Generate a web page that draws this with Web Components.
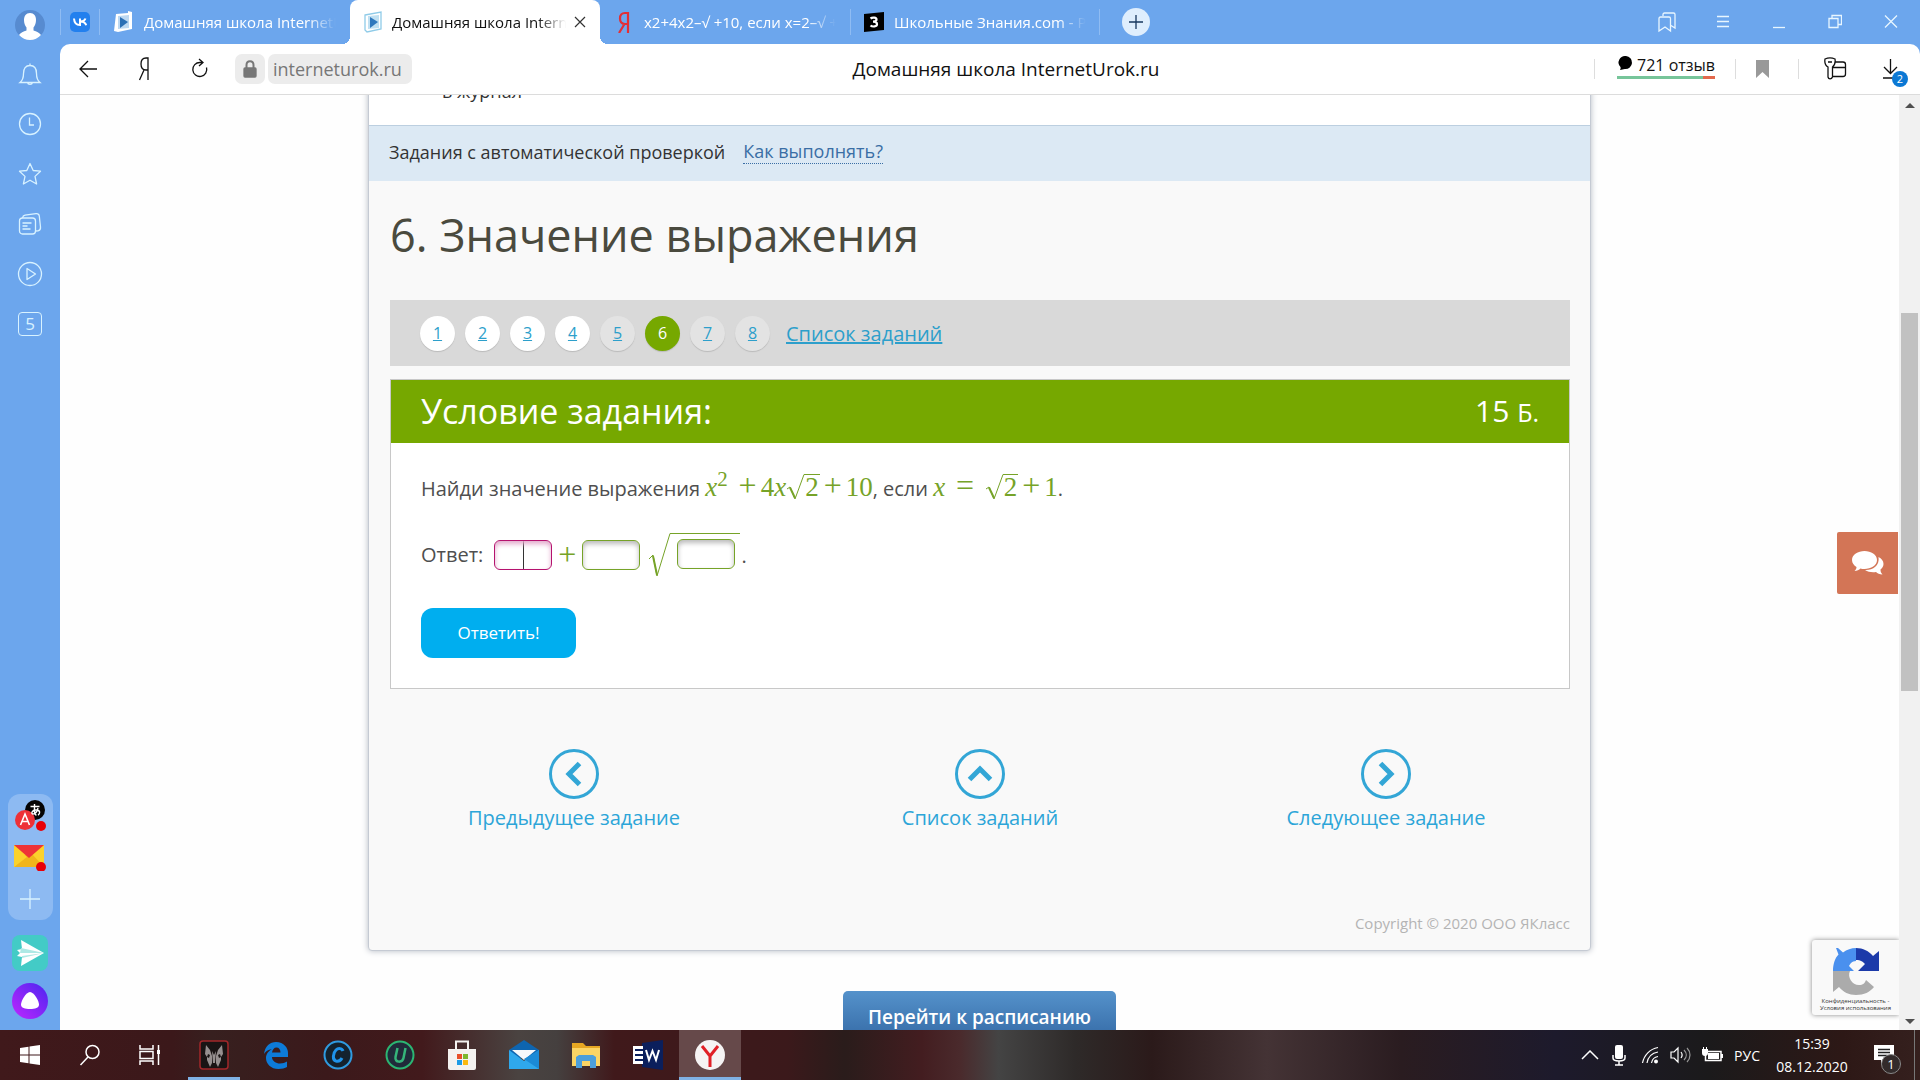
<!DOCTYPE html>
<html lang="ru">
<head>
<meta charset="utf-8">
<title>Домашняя школа InternetUrok.ru</title>
<style>
    html, body {
        height: 100%;
        margin: 0;
        overflow: hidden;
        font-family: "Open Sans", "Noto Sans", "Noto Sans CJK JP", sans-serif;
    }
</style>
</head>
<body>

<desk-top></desk-top>

<template id="desk-top">
    <style>
        :host {
            display: grid;
            grid-template: minmax(0, 1fr) 50px / 60px minmax(0, 1fr);
            height: 100%;
            background: #6ca6ed;
        }
        main {
            display: flex;
            flex-direction: column;
            min-height: 0;
        }
        task-bar {
            grid-column: 1 / -1;
        }
    </style>
    <side-bar></side-bar>
    <main>
        <tab-strip></tab-strip>
        <address-bar></address-bar>
        <page-view></page-view>
    </main>
    <task-bar></task-bar>
</template>

<!-- left browser panel -->
<template id="side-bar">
    <style>
        :host {
            display: flex;
            flex-direction: column;
            align-items: center;
        }
        button {
            all: unset;
            display: flex;
            align-items: center;
            justify-content: center;
            width: 50px;
            height: 50px;
            color: #d8f2ff;
            font-size: 17px;
        }
        svg {
            display: block;
            fill: none;
            stroke: currentColor;
            stroke-width: 1.3;
        }
        .user {
            height: 49px;
        }
        .square {
            box-sizing: border-box;
            width: 24px;
            height: 24px;
            border: 1px solid currentColor;
            border-radius: 4px;
            line-height: 22px;
            text-align: center;
        }
        .apps {
            display: flex;
            flex-direction: column;
            align-items: center;
            margin-top: auto;
            border-radius: 12px;
            background: #8dbaf2;
        }
        .apps button {
            width: 45px;
            height: 42px;
        }
        .big {
            height: 36px;
            margin-top: 15px;
        }
        .alice {
            margin: 12px 0 11px;
        }
    </style>
    <button class="user" aria-label="Профиль">
        <svg width="30" height="30" viewBox="0 0 30 30"><g stroke="none"><circle cx="15" cy="15" r="15" fill="#578bd0"/><path d="M15 3c4 0 6 3 6 7 0 3-1 6-2.500 7.500v3c3 1 6 2 7.500 4.500A15 15 0 0 1 15 30 15 15 0 0 1 4 25c1.500-2.500 4.500-3.500 7.500-4.500v-3C10 16 9 13 9 10c0-4 2-7 6-7z" fill="#fff"/></g></svg>
    </button>
    <button aria-label="Уведомления"><svg width="24" height="24" viewBox="0 0 24 24"><path d="M12 1.500v2M2 20.500h20c-2.500-2-3.500-4-3.500-9 0-5-2-8-6.500-8s-6.500 3-6.500 8c0 5-1 7-3.500 9zM9.500 20.500c.5 2.500 4.500 2.500 5 0"/></svg></button>
    <button aria-label="История"><svg width="24" height="24" viewBox="0 0 24 24"><circle cx="12" cy="12" r="10.500"/><path d="M11.500 5.500V13H16"/></svg></button>
    <button aria-label="Избранное"><svg width="24" height="24" viewBox="0 0 24 24"><path stroke-linejoin="round" d="M12 1.500l3.200 7 7.300.7-5.500 5.200 1.600 7.600-6.600-3.800L5.400 22 7 14.400 1.500 9.200l7.300-.7z"/></svg></button>
    <button aria-label="Коллекции"><svg width="24" height="24" viewBox="0 0 24 24"><rect x="1.500" y="6" width="16" height="16" rx="3"/><path d="M4.500 6c.3-2 1-2.500 2.500-2.800l11-1.500c2-.2 3 .6 3.300 2.300l1.200 11c.2 2-.6 3.500-2.500 3.800l-2.500.2M4.500 11h9M4.500 14h5M4.500 17h8"/></svg></button>
    <button aria-label="Видео"><svg width="26" height="26" viewBox="0 0 26 26"><circle cx="13" cy="13" r="11.500"/><path stroke-linejoin="round" d="M10 7.500v11l8.500-5.500z"/></svg></button>
    <button aria-label="Вкладки"><span class="square">5</span></button>
    <div class="apps">
        <button aria-label="Переводчик"><svg width="32" height="32" viewBox="0 0 32 32"><g stroke="none"><circle cx="21" cy="11" r="10" fill="#050505"/><circle cx="11" cy="21" r="10" fill="#ee3137"/><circle cx="27" cy="27" r="5" fill="#e80008"/></g><path d="M6.500 26l4.500-11 4.500 11M8 22.500h6" stroke="#fff" stroke-width="1.600"/><path d="M16.500 7.500h9M20.500 5v7c0 3 1 4 2 4M24 9c-1 4-3 6-5 6s-1.500-4 3-4c5 0 4 4 2 5" stroke="#fff" stroke-width="1.400"/></svg></button>
        <button aria-label="Почта"><svg width="32" height="28" viewBox="0 0 32 28"><g stroke="none"><path fill="#fbd22c" d="M0 2h30v22H0z"/><path fill="#f0b51c" d="M0 24L12 11h6l12 13z"/><path fill="#fbd22c" d="M0 2l13 12L0 24z"/><path fill="#ee3437" d="M0 2h30L15 15z"/><circle cx="27" cy="24" r="5" fill="#e80008"/></g></svg></button>
        <button aria-label="Добавить"><svg width="20" height="20" viewBox="0 0 20 20"><path d="M10 0v20M0 10h20"/></svg></button>
    </div>
    <button class="big" aria-label="Телепорт"><svg width="36" height="36" viewBox="0 0 36 36"><g stroke="none"><rect width="36" height="36" rx="8" fill="#43cbc6"/><path fill="#fff" d="M9 5l23 13L9 31l1-9-5-1 3-3-3-3 5-1z"/><path fill="#aee9e5" d="M9 13l23 5-24 0zM10 23l22-5-22 3z"/></g></svg></button>
    <button class="big alice" aria-label="Алиса"><svg width="36" height="36" viewBox="0 0 36 36"><defs><linearGradient id="a" x1="0" y1="1" x2="1" y2="0"><stop offset="0" stop-color="#c026ff"/><stop offset="1" stop-color="#4a26f0"/></linearGradient></defs><g stroke="none"><circle cx="18" cy="18" r="18" fill="url(#a)"/><path fill="#fff" d="M18 9c4 0 9 9 9 12.500S23 26 18 26s-9-1-9-4.500S14 9 18 9z"/></g></svg></button>
</template>

<template id="tab-strip">
    <style>
        :host {
            display: flex;
            align-items: center;
            height: 44px;
        }
        .pin {
            display: flex;
            box-sizing: border-box;
            width: 40px;
            height: 26px;
            padding-left: 9px;
            align-items: center;
            border: solid #8fbcf3;
            border-width: 0 1px;
        }
        .new {
            all: unset;
            width: 28px;
            height: 28px;
            margin-left: 22px;
            border-radius: 50%;
            background: #dfeefd;
        }
        .new svg {
            stroke: #17375e;
        }
        .window {
            display: flex;
            margin-left: auto;
            margin-right: 1px;
        }
        .window button {
            all: unset;
            display: flex;
            justify-content: center;
            width: 56px;
        }
        svg {
            display: block;
            fill: none;
            stroke: #e8f6ff;
            stroke-width: 1.300;
        }
        browser-tab svg {
            flex: none;
            stroke: none;
        }
    </style>
    <a class="pin" href="#vk" aria-label="ВКонтакте"><svg width="20" height="20" viewBox="0 0 20 20"><rect width="20" height="20" rx="5" fill="#2380ee" stroke="none"/><path d="M4 6.500c.3 4.500 2.500 6.500 6 6.500V6.500M15.500 6.500c-.7 2-2.500 3-5 3 3 0 5 1.500 5.700 3.800" stroke="#fff" stroke-width="2"/></svg></a>
    <browser-tab>
        <svg slot="icon" width="20" height="22" viewBox="0 0 20 22"><path fill="#fff" d="M2 3l12-1 0-2 4 1 0 17-14 3-4-1z"/><path fill="#bcd8f2" d="M4 5l11-1v13L4 18z"/><path fill="#2a6fb5" d="M6 6l8 5-8 6z"/></svg>
        Домашняя школа InternetUrok.ru
    </browser-tab>
    <browser-tab active>
        <svg slot="icon" width="20" height="22" viewBox="0 0 20 22"><path fill="#fff" stroke="#8fcbe8" d="M1 4l16-3v17L3 21l-2-2z"/><path fill="#bfe0f2" d="M4 5l11-1v13L4 18z"/><path fill="#2f78bd" d="M6 6l8 5-8 6z"/></svg>
        Домашняя школа InternetUrok.ru
    </browser-tab>
    <browser-tab>
        <svg slot="icon" width="20" height="22" viewBox="0 0 20 22"><path fill="none" stroke="#e32f35" stroke-width="2.200" d="M14 22V2h-3C7.500 2 6 4.500 6 7.500S7.500 13 11 13h3M10.500 13L5 22"/></svg>
        x2+4x2–√ +10, если x=2–√ +1
    </browser-tab>
    <browser-tab divided>
        <svg slot="icon" width="20" height="22" viewBox="0 0 20 22"><path fill="#000" d="M0 3l20-2v18L0 21z"/><path fill="none" stroke="#fff" stroke-width="2.200" d="M6.500 7.500c2-1.500 6-1 6 1 0 1.600-1.500 2.200-3.500 2.200 2 0 4 .6 4 2.500 0 2.400-4.500 3-6.500 1.300"/></svg>
        Школьные Знания.com - Решаем
    </browser-tab>
    <button class="new" aria-label="Новая вкладка"><svg width="28" height="28" viewBox="0 0 28 28"><path d="M14 7v14M7 14h14"/></svg></button>
    <div class="window">
        <button aria-label="Закладки"><svg width="20" height="22" viewBox="0 0 20 22"><path d="M6 5V3.500C6 2.500 6.500 2 7.500 2h9c1 0 1.500.5 1.500 1.500V17l-4-2.500M2 20V7.500C2 6.500 2.500 6 3.500 6h8.500c1 0 1.500.5 1.500 1.500V20l-5.500-4z"/></svg></button>
        <button aria-label="Меню"><svg width="14" height="22" viewBox="0 0 14 22"><path d="M1 5.500h12M1 10.500h12M1 15.500h12"/></svg></button>
        <button aria-label="Свернуть"><svg width="14" height="22" viewBox="0 0 14 22"><path d="M1 16.500h12"/></svg></button>
        <button aria-label="Развернуть"><svg width="14" height="22" viewBox="0 0 14 22"><path d="M1 7.500h9v9H1zM4 7V4.500h9.500v9H10.500"/></svg></button>
        <button aria-label="Закрыть"><svg width="14" height="22" viewBox="0 0 14 22"><path d="M1 4.500l12 12M13 4.500l-12 12"/></svg></button>
    </div>
</template>

<template id="browser-tab">
    <style>
        :host {
            display: flex;
            box-sizing: border-box;
            position: relative;
            flex: 0 1 250px;
            min-width: 0;
            height: 44px;
            padding: 0 14px;
            gap: 10px;
            align-items: center;
            color: #fff;
            font-size: 15px;
            line-height: 44px;
            white-space: nowrap;
        }
        a {
            flex: 1;
            min-width: 0;
            overflow: hidden;
            color: inherit;
            text-decoration: none;
            -webkit-mask: linear-gradient(90deg, #000 calc(100% - 28px), transparent);
            mask: linear-gradient(90deg, #000 calc(100% - 28px), transparent);
        }
        button {
            all: unset;
            display: none;
            line-height: 0;
        }
        :host([active]) {
            gap: 8px;
            border-radius: 8px 8px 0 0;
            background: #fff;
            color: #111;
        }
        :host([active]) button {
            display: block;
        }
        /* flared feet of the open tab */
        :host([active])::before,
        :host([active])::after {
            content: "";
            position: absolute;
            bottom: 0;
            width: 8px;
            height: 8px;
        }
        :host([active])::before {
            left: -8px;
            background: radial-gradient(circle at 0 0, transparent 8px, #fff 8px);
        }
        :host([active])::after {
            right: -8px;
            background: radial-gradient(circle at 100% 0, transparent 8px, #fff 8px);
        }
        :host([divided]) {
            background:
                linear-gradient(#8fbcf3, #8fbcf3) left / 1px 26px no-repeat,
                linear-gradient(#8fbcf3, #8fbcf3) right / 1px 26px no-repeat;
        }
    </style>
    <slot name="icon"></slot>
    <a href="#tab"><slot></slot></a>
    <button aria-label="Закрыть вкладку"><svg width="12" height="12" viewBox="0 0 12 12" stroke="#333" stroke-width="1.200"><path d="M1 1l10 10M11 1L1 11"/></svg></button>
</template>

<template id="address-bar">
    <style>
        :host {
            display: grid;
            grid-template-columns: 1fr auto 1fr;
            align-items: center;
            box-sizing: border-box;
            height: 51px;
            border-bottom: 1px solid #dcdcdc;
            border-radius: 10px 10px 0 0;
            background: #fff;
            color: #111;
            font-size: 18px;
        }
        div {
            display: flex;
            align-items: center;
        }
        .right {
            justify-content: flex-end;
        }
        button {
            all: unset;
            display: flex;
            justify-content: center;
            width: 56px;
        }
        .title {
            padding-left: 32px;
            font-size: 19px;
        }
        .secure {
            width: 30px;
            height: 30px;
            margin-left: 7px;
            align-items: center;
            border-radius: 7px;
            background: #ececec;
        }
        .url {
            box-sizing: border-box;
            width: 144px;
            height: 30px;
            margin-left: 3px;
            padding: 0 5px;
            border: 0;
            border-radius: 7px;
            background: #ececec;
            color: #777;
            font: inherit;
        }
        .reviews {
            display: block;
            margin: 0 20px 6px 22px;
            border-bottom: 3px solid;
            border-image: linear-gradient(90deg, #77c59a 87%, #e3694d 87%) 1;
            color: #111;
            font-size: 16px;
            line-height: 22px;
            text-decoration: none;
            white-space: nowrap;
        }
        .line {
            width: 1px;
            height: 20px;
            background: #ddd;
        }
        .mark {
            width: 54px;
            margin-right: 8px;
        }
        .keys {
            width: 72px;
        }
        .load {
            position: relative;
            width: 41px;
            padding-right: 8px;
        }
        .load span {
            position: absolute;
            right: 12px;
            top: 13px;
            width: 16px;
            height: 16px;
            border-radius: 50%;
            background: #0b78d4;
            color: #fff;
            font-size: 11px;
            line-height: 16px;
            text-align: center;
        }
        svg {
            fill: none;
            stroke: #111;
            stroke-width: 1.300;
        }
    </style>
    <div>
        <button aria-label="Назад"><svg width="18" height="18" viewBox="0 0 18 18"><path d="M18 9H1M9 1L1 9l8 8"/></svg></button>
        <button aria-label="Яндекс"><svg width="12" height="24" viewBox="0 0 12 24"><path d="M10 23V1H8C4.500 1 3 3.500 3 7s1.500 6 5 6h2M6 13L1.500 23"/></svg></button>
        <button aria-label="Обновить"><svg width="18" height="22" viewBox="0 0 18 22"><path d="M9 4.500a7 7 0 1 0 6.500 5M9 4.500h3M8 1l4 3.500L8 8"/></svg></button>
        <button class="secure" aria-label="Защищено"><svg width="14" height="18" viewBox="0 0 14 18"><path stroke="#777" d="M3.500 8V5c0-5 7-5 7 0v3" stroke-width="2"/><rect x="1" y="8" width="12" height="9" rx="1" fill="#777" stroke="#777"/></svg></button>
        <input class="url" value="interneturok.ru" aria-label="Адрес">
    </div>
    <span class="title">Домашняя школа InternetUrok.ru</span>
    <div class="right">
        <span class="line"></span>
        <a class="reviews" href="#reviews"><svg width="16" height="16" viewBox="0 0 16 16"><path fill="#000" stroke="none" d="M9 1a6.500 6.500 0 1 1-1 13c-2 0-3 1-5 1 .5-1 .8-1.500.5-3A6.500 6.500 0 0 1 9 1z"/></svg> 721 отзыв</a>
        <span class="line"></span>
        <button class="mark" aria-label="В закладки"><svg width="14" height="18" viewBox="0 0 14 18"><path fill="#999" stroke="none" d="M0 0h13v18l-6.500-6L0 18z"/></svg></button>
        <span class="line"></span>
        <button class="keys" aria-label="Пароли"><svg width="24" height="24" viewBox="0 0 24 24"><path d="M2 2c3-1.300 7-1.300 10 0 .5 3 0 6-2.500 8v10c-1 2.500-4 2.500-4.500 0V10C1.500 8 1.500 5 2 2zM5 5h4M12.500 5H20c1.500 0 2.500 1 2.500 2.500V17c0 1.500-1 2.500-2.500 2.500H9.500M10 10.500h12.500"/></svg></button>
        <button class="load" aria-label="Загрузки"><svg width="20" height="22" viewBox="0 0 20 22"><path d="M8.500 1v14M2 9l6.500 6.500L15 9M1 20h10"/></svg><span>2</span></button>
    </div>
</template>

<!-- web page -->
<template id="page-view">
    <style>
        :host {
            display: grid;
            grid-template-columns: minmax(0, 1fr) 21px;
            position: relative;
            flex: 1;
            min-height: 0;
            background: #fefefe;
        }
        .scroll {
            display: flex;
            flex-direction: column;
            align-items: center;
            overflow: hidden;
        }
        lesson-card {
            flex: none;
            width: calc(100% - 616px);
            min-width: 900px;
            margin-top: -30px;
        }
        .schedule {
            flex: none;
            margin-top: 40px;
            padding: 0 25px;
            border: 0;
            border-radius: 5px;
            background: linear-gradient(#5592cb, #3b72ad 40px);
            color: #fff;
            font: 600 19px/52px "Open Sans", sans-serif;
        }
        .bar {
            display: flex;
            flex-direction: column;
            align-items: center;
            justify-content: space-between;
            padding: 8px 0 6px;
            background: #f1f1f1;
        }
        .thumb {
            width: 17px;
            height: 41%;
            margin-bottom: 123px;
            background: #c1c1c1;
        }
        .chat {
            position: absolute;
            right: 22px;
            top: 437px;
            display: grid;
            place-items: center;
            width: 61px;
            height: 62px;
            padding: 0;
            border: 0;
            border-radius: 2px 0 0 2px;
            background: #d37556;
        }
        .captcha {
            position: absolute;
            right: 21px;
            bottom: 15px;
            box-sizing: border-box;
            width: 87px;
            height: 75px;
            padding-top: 6px;
            border-radius: 3px 0 0 3px;
            background: #f9f9f9;
            box-shadow: 0 0 5px #888;
            font-size: 6px;
            line-height: 7px;
            text-align: center;
            white-space: nowrap;
            clip-path: inset(-8px 0 -8px -8px);
        }
        .captcha a {
            display: block;
            color: #333;
            text-decoration: none;
        }
        svg {
            display: block;
            margin: 0 auto;
        }
    </style>
    <div class="scroll">
        <lesson-card></lesson-card>
        <button class="schedule">Перейти к расписанию</button>
    </div>
    <div class="bar">
        <svg width="10" height="5" viewBox="0 0 10 5"><path fill="#505050" d="M0 5l5-5 5 5z"/></svg>
        <div class="thumb"></div>
        <svg width="10" height="5" viewBox="0 0 10 5"><path fill="#505050" d="M0 0l5 5 5-5z"/></svg>
    </div>
    <button class="chat" aria-label="Чат"><svg width="32" height="26" viewBox="0 0 32 26" fill="#fff"><path d="M12.500 1C19 1 25 4.500 25 10s-6 9-12.500 9c-1.500 0-3 0-4-.5C7 20 5 21 2.500 21c1.500-1.500 2-2.500 2-4C2 15.500 0 13 0 10 0 4.500 6 1 12.500 1z"/><path d="M26.500 7c3 1.500 5 4 5 7 0 2.500-1.500 4.500-3 5.500 0 2 .5 3.500 2 5-3 0-5-1-6.500-2.500-4 .5-8 0-11-2C20 20.500 28 16 26.500 7z"/></svg></button>
    <div class="captcha">
        <svg width="50" height="52" viewBox="0 0 50 52"><path fill="#4a90ee" d="M7 2L12 6.500A23 23 0 0 1 25 2v13c-4 0-6 3-7 5l5 5H2C2 18 4 12 7.500 8.500L5 2z"/><path fill="#1c3aa9" d="M25 2c7 0 13 3 17 8l6-5v20H27l7-7c-2-2-4-4-9-4z"/><path fill="#ababab" d="M2 25h12l5 0c-3 6 2 14 9 14 4 0 6-2 7-5l8 7c-4 5-10 8-18 8-7 0-13-3-17-8l-6 5z"/></svg>
        <a href="#privacy">Конфиденциальность -</a>
        <a href="#terms">Условия использования</a>
    </div>
</template>

<template id="lesson-card">
    <style>
        :host {
            display: block;
            box-sizing: border-box;
            border: 1px solid #c5cad3;
            border-radius: 4px;
            background: #f9f9f9;
            box-shadow: 0 0 6px #b5bac4;
        }
        .top {
            height: 29px;
            padding: 15px 73px;
            background: #fff;
            color: #333;
            font-size: 18px;
            line-height: 20px;
        }
        .notice {
            display: flex;
            align-items: center;
            gap: 18px;
            box-sizing: border-box;
            height: 56px;
            padding: 0 20px 4px;
            border-top: 1px solid #bccfe0;
            background: #dce9f4;
            color: #333;
            font-size: 18px;
            line-height: 24px;
        }
        .notice a {
            border-bottom: 1px dotted #3a6ea5;
            color: #3a6ea5;
            text-decoration: none;
        }
        .content {
            padding: 22px 20px 17px 21px;
        }
        h1 {
            margin: 0 0 33px;
            color: #4a4a3e;
            font-size: 45px;
            font-weight: 400;
            line-height: 64px;
        }
        nav {
            display: grid;
            grid-template-columns: 368px 1fr 368px;
            margin-top: 60px;
        }
        footer {
            margin-top: 81px;
            color: #b4b4b4;
            font-size: 15px;
            line-height: 20px;
            text-align: right;
        }
    </style>
    <div class="top">в журнал</div>
    <div class="notice">
        <span>Задания с автоматической проверкой</span>
        <a href="#how">Как выполнять?</a>
    </div>
    <div class="content">
        <h1>6. Значение выражения</h1>
        <task-pager count="8" current="6" seen="4"></task-pager>
        <task-panel></task-panel>
        <nav>
            <round-link turn="-90">Предыдущее задание</round-link>
            <round-link turn="0">Список заданий</round-link>
            <round-link turn="90">Следующее задание</round-link>
        </nav>
        <footer>Copyright © 2020 ООО ЯКласс</footer>
    </div>
</template>

<template id="task-pager">
    <style>
        :host {
            display: flex;
            align-items: center;
            gap: 10px;
            height: 66px;
            padding: 0 30px;
            background: #d9d9d9;
        }
        a {
            color: #2d9fcb;
            font-size: 20px;
        }
        .num {
            width: 35px;
            height: 35px;
            border-radius: 50%;
            background: #e3e3e3;
            box-shadow: 0 1px 1px #bbb;
            font-size: 16px;
            line-height: 35px;
            text-align: center;
        }
        .seen {
            background: #fff;
        }
        .current {
            background: #76a800;
            color: #fff;
            text-decoration: none;
        }
        .all {
            margin-left: 6px;
        }
    </style>
    <a class="all" href="#list">Список заданий</a>
</template>

<template id="task-panel">
    <style>
        :host {
            display: block;
            margin-top: 13px;
            border: 1px solid #c8c8c8;
            background: #fff;
            color: #4f4f4f;
            font-size: 20px;
        }
        header {
            display: flex;
            box-sizing: border-box;
            align-items: center;
            justify-content: space-between;
            height: 63px;
            padding: 0 30px 2px;
            background: #76a800;
            color: #fff;
            font-size: 30px;
        }
        h2 {
            margin: 0;
            font-size: 34px;
            font-weight: 400;
        }
        header small {
            font-size: 25px;
        }
        form {
            padding: 22px 30px 30px;
        }
        p {
            height: 48px;
            margin: 0 0 20px;
            line-height: 48px;
        }
        .math {
            color: #76a328;
            font-family: "Liberation Serif", serif;
            font-size: 27px;
            line-height: 0;
            white-space: nowrap;
        }
        .math sup {
            font-size: 21px;
            vertical-align: 10px;
        }
        .math b {
            margin: 0 4px;
            font-size: 32px;
            font-weight: 400;
        }
        .answer {
            display: flex;
            align-items: center;
            height: 44px;
        }
        .answer .math {
            margin: 0 2px;
        }
        label {
            padding-bottom: 2px;
        }
        input {
            box-sizing: border-box;
            width: 58px;
            height: 30px;
            border: 1px solid #76a328;
            border-radius: 6px;
            background: #fff;
            box-shadow: inset 0 3px 5px #bbb;
            text-align: center;
        }
        .focus {
            margin-left: 11px;
            border-color: #b5126e;
            background: linear-gradient(#333, #333) center / 1px 100% no-repeat #fff;
            box-shadow: inset 0 3px 5px #e3a9cc;
        }
        math-root[tall] {
            margin: 0 1px 0 8px;
        }
        button {
            margin-top: 31px;
            width: 155px;
            height: 50px;
            padding: 0 0 2px;
            border: 0;
            border-radius: 12px;
            background: #00aeef;
            color: #fff;
            font: 17px "Open Sans", sans-serif;
            display: block;
        }
    </style>
    <header><h2>Условие задания:</h2><span>15 <small>Б.</small></span></header>
    <form onsubmit="return false">
        <p>Найди значение выражения <span class="math"><i>x</i><sup>2</sup> <b>+</b>4<i>x</i><math-root>2</math-root><b>+</b>10</span>, если <span class="math"><i>x</i> <b>=</b> <math-root>2</math-root><b>+</b>1</span>.</p>
        <div class="answer">
            <label for="first">Ответ:</label>
            <input class="focus" id="first">
            <span class="math"><b>+</b></span>
            <input aria-label="Множитель">
            <math-root tall><input aria-label="Подкоренное выражение"></math-root>
            <span>.</span>
        </div>
        <button>Ответить!</button>
    </form>
</template>

<template id="math-root">
    <style>
        :host {
            display: inline-flex;
            align-items: stretch;
            color: #76a328;
            line-height: 24px;
        }
        span {
            align-self: baseline;
            padding: 0 1px;
            border-top: 1px solid;
        }
        svg {
            width: 18px;
            min-height: 100%;
            overflow: visible;
            fill: none;
            stroke: currentColor;
        }
        .tall {
            display: none;
        }
        :host([tall]) .tall {
            display: block;
            width: 22px;
        }
        :host([tall]) .short {
            display: none;
        }
        :host([tall]) span {
            box-sizing: border-box;
            height: 44px;
            padding: 5px 5px 0 7px;
        }
    </style>
    <svg class="short" viewBox="0 0 18 25" preserveAspectRatio="none"><path d="M1 15l3-2 5 12L18 .5"/><path stroke-width="2" d="M4 13.500l5 10.500"/></svg>
    <svg class="tall" viewBox="0 0 22 44" preserveAspectRatio="none"><path d="M1 26l4-4 4 21L22 .5"/><path stroke-width="2" d="M5 23l4 19"/></svg>
    <span><slot></slot></span>
</template>

<template id="round-link">
    <style>
        :host {
            display: block;
            font-size: 20px;
            line-height: 28px;
            text-align: center;
        }
        a {
            display: inline-block;
            color: #2ca5d8;
            text-decoration: none;
        }
        svg {
            display: block;
            margin: 0 auto 5px;
            fill: none;
            stroke: #33a6d6;
        }
    </style>
    <a href="#go">
        <svg width="50" height="50" viewBox="0 0 50 50"><circle cx="25" cy="25" r="23.500" stroke-width="3"/><path stroke-width="5" d="M14.500 30.500L25 20l10.500 10.500"/></svg>
        <slot></slot>
    </a>
</template>

<!-- system task bar -->
<template id="task-bar">
    <style>
        :host {
            display: flex;
            align-items: stretch;
            background: linear-gradient(90deg, #40191b 0, #3b181a 9%, #37201f 11%, #3b191b 17%, #421a1c 22%, #4a4341 27%, #45403f 29%, #40191b 32%, #3b191b 41%, #2a1c1b 44%, #431d20 48%, #4a2a2c 50%, #444 52%, #2e2a29 56%, #2b1a1a 60%, #443335 66%, #2a1c20 73%, #1d1a2c 81%, #1b1a1b 89%, #2d1816 96%, #35201e);
            color: #fff;
            font-size: 14px;
        }
        button {
            all: unset;
            display: grid;
            place-items: center;
            width: 62px;
        }
        .sys {
            width: 60px;
        }
        .open {
            box-shadow: inset 0 -3px #7fb2e5;
        }
        .first {
            width: 52px;
            margin: 0 5px 0 8px;
        }
        .front {
            background: #66494a;
        }
        svg {
            display: block;
            fill: none;
            stroke: #fff;
            stroke-width: 1.500;
        }
        .fill {
            stroke: none;
        }
        .tray {
            display: flex;
            align-items: center;
            gap: 9px;
            margin-left: auto;
        }
        time {
            width: 86px;
            margin-right: 6px;
            line-height: 23px;
            text-align: center;
        }
        .notes {
            position: relative;
            width: 30px;
            margin-right: 5px;
        }
        .notes span {
            position: absolute;
            right: -1px;
            top: 10px;
            width: 18px;
            height: 18px;
            border: 1px solid #888;
            border-radius: 50%;
            background: #332b2b;
            font-size: 13px;
            line-height: 18px;
            text-align: center;
        }
        .edge {
            width: 5px;
            height: 100%;
            border-left: 1px solid #777;
        }
    </style>
    <button class="sys" aria-label="Пуск"><svg class="fill" width="20" height="20" viewBox="0 0 20 20"><path fill="#fff" d="M0 3l8.500-1.200v7.700H0zM9.500 1.600L20 0v9.500H9.500zM0 10.500h8.500v7.700L0 17zM9.500 10.500H20V20L9.500 18.400z"/></svg></button>
    <button class="sys" aria-label="Поиск"><svg width="22" height="22" viewBox="0 0 22 22"><circle cx="13.500" cy="8" r="6.500"/><path d="M9 13l-7.500 8"/></svg></button>
    <button class="sys" aria-label="Представление задач"><svg width="22" height="22" viewBox="0 0 22 22"><path d="M1 1v4h13V1M1 21v-4h13v4M1 7.500h13v7H1zM19.500 1v20"/><path stroke-width="3" d="M19.500 6v4"/></svg></button>
    <button class="open first" aria-label="PredatorSense"><svg class="fill" width="30" height="30" viewBox="0 0 30 30"><rect x="1" y="1" width="28" height="28" rx="3" fill="#1a1414" stroke="#a3272a"/><path fill="#979090" d="M7 5l4 5 2 6v7l-2 4-3-7v-3l2 1 1-3-2-1-1 3-2-3zM23 5l-4 5-2 6v7l2 4 3-7v-3l-2 1-1-3 2-1 1 3 2-3zM13 11l2 4 2-4-1 12h-2z"/></svg></button>
    <button aria-label="Edge"><svg class="fill" width="26" height="28" viewBox="0 0 26 28"><path fill="#0d7bd8" d="M1 13C2 5 7 1 13 1c8 0 12 6 12 11v4H9c0 4 4 6.500 8 6.500 3 0 5-.8 7-2V26c-2 1-5 2-8.500 2C8 28 3 23 3 17c0-4 2.500-7 6-9-4 .5-6.500 2.500-8 5zM9 11.500h8.500c0-3-1.500-5-4-5S9.500 8.500 9 11.500z"/></svg></button>
    <button aria-label="Cleaner"><svg width="30" height="30" viewBox="0 0 30 30"><circle cx="15" cy="15" r="13.500" fill="#14222e" stroke="#2f9be0" stroke-width="2"/><path stroke="#1f93ea" stroke-width="3" d="M20 11c-1-3-5-3-7-1-3 3-4 10 0 11 3 .6 5-1 6-3"/></svg></button>
    <button aria-label="Uninstaller"><svg width="30" height="30" viewBox="0 0 30 30"><circle cx="15" cy="15" r="13.500" fill="#202b3a" stroke="#2bb673" stroke-width="2"/><path stroke="#35b57a" stroke-width="2.500" d="M12.500 8l-2 9c-1 6 7 6 8 1l2-10"/></svg></button>
    <button aria-label="Магазин"><svg class="fill" width="30" height="30" viewBox="0 0 30 30"><path fill="#f4f2f0" d="M1 9h28v19a2 2 0 0 1-2 2H3a2 2 0 0 1-2-2z"/><path stroke="#f4f2f0" stroke-width="2" d="M9 9V1.500h12V9"/><path fill="#e8502a" d="M10 14h5v5h-5z"/><path fill="#7cb82f" d="M16 14h5v5h-5z"/><path fill="#1e9be6" d="M10 20h5v5h-5z"/><path fill="#fbb910" d="M16 20h5v5h-5z"/></svg></button>
    <button aria-label="Почта"><svg class="fill" width="30" height="30" viewBox="0 0 30 30"><path fill="#0e65b0" d="M0 10L15 0l15 10v8H0z"/><path fill="#f5f8fb" d="M3 10h24l-12 10z"/><path fill="#2fa8ec" d="M0 10l15 11L30 10v19H0z"/><path fill="#1b8ad6" d="M15 19L30 29V10z"/></svg></button>
    <button aria-label="Проводник"><svg class="fill" width="30" height="28" viewBox="0 0 30 28"><path fill="#e6a723" d="M1 2h11l3 3h14v8H1z"/><path fill="#fbd565" d="M1 7h28v18H1z"/><path fill="#4c9fdb" d="M5 16l3-2h14l3 2v11h-6v-7h-8v7H5z"/></svg></button>
    <button aria-label="Word"><svg class="fill" width="30" height="30" viewBox="0 0 30 30"><path fill="#0b1f5c" d="M9 3l21-3v30L9 27z"/><path fill="#fff" d="M0 6h10v18H0z"/><path stroke="#0b1f5c" stroke-width="2" d="M2 10h8M2 15h8M2 20h8"/><path stroke="#fff" stroke-width="2" d="M13 10l3 10 3.500-9 3.500 9 3-10"/></svg></button>
    <button class="open front" aria-label="Яндекс.Браузер"><svg width="30" height="30" viewBox="0 0 30 30"><circle cx="15" cy="15" r="15" fill="#f5f3f3" stroke="none"/><path stroke="#e01f26" stroke-width="3" d="M7 6l8 10 8-10M15 15v12"/></svg></button>
    <div class="tray">
        <svg width="18" height="10" viewBox="0 0 18 10"><path d="M1 9l8-8 8 8"/></svg>
        <svg width="24" height="22" viewBox="0 0 24 22"><rect x="7" y="1" width="8" height="14" rx="2" fill="#fff" stroke="none"/><path d="M5 11v3c0 4 12 4 12 0v-3M11 17v4M7 21h8"/></svg>
        <svg width="20" height="18" viewBox="0 0 20 18"><path d="M1.500 17C3 9 9 3 17 1.500M6 17c1-6 5-10 11-11M10.500 17c.5-3 3-6 6.500-6.500" stroke-width="1.200"/><circle cx="15" cy="15.500" r="2" fill="#fff" stroke="none"/></svg>
        <svg width="22" height="18" viewBox="0 0 22 18"><g stroke-width="1.200"><path d="M1 6v6h3l4 4V2L4 6zM11 6c1.500 2 1.500 4 0 6"/><path stroke="#999" d="M14 4c3 3 3 7 0 10M17 2c4 4 4 10 0 14"/></g></svg>
        <svg width="24" height="16" viewBox="0 0 24 16"><path d="M7 4.500h13v9H4.500V8"/><path fill="#fff" stroke="none" d="M7 6h11v6H7zM20 7h2v4h-2zM1 2h6v4a3 3 0 0 1-6 0zM2 0h1v2H2zM5 0h1v2H5z"/></svg>
        <span>РУС</span>
        <time datetime="2020-12-08T15:39">15:39<br>08.12.2020</time>
        <button class="notes" aria-label="Уведомления"><svg width="22" height="22" viewBox="0 0 22 22"><path fill="#fff" stroke="none" d="M0 1h20v15H11l-4 4v-4H0z"/><path stroke="#222" d="M4 5.500h12M4 8.500h12M4 11.500h9"/></svg><span>1</span></button>
        <span class="edge"></span>
    </div>
</template>

<script>
    class TemplateElement extends HTMLElement {
        constructor() {
            super();
            const template = document.getElementById(this.localName);
            this.attachShadow({ mode: "open" }).append(template.content.cloneNode(true));
        }
    }

    class TaskPager extends TemplateElement {
        connectedCallback() {
            const current = Number(this.getAttribute("current"));
            const seen = Number(this.getAttribute("seen"));
            const all = this.shadowRoot.querySelector(".all");

            for (let i = 1; i <= Number(this.getAttribute("count")); i++) {
                const link = document.createElement("a");
                link.href = "#task-" + i;
                link.textContent = i;
                link.className = "num";
                link.classList.toggle("seen", i <= seen);
                link.classList.toggle("current", i === current);
                all.before(link);
            }
        }
    }

    class RoundLink extends TemplateElement {
        connectedCallback() {
            const arrow = this.shadowRoot.querySelector("path");
            arrow.setAttribute("transform", `rotate(${this.getAttribute("turn")} 25 25)`);
        }
    }

    customElements.define("task-pager", TaskPager);
    customElements.define("round-link", RoundLink);

    for (const name of ["math-root", "task-panel", "lesson-card", "page-view", "address-bar",
        "browser-tab", "tab-strip", "side-bar", "task-bar", "desk-top"]) {
        customElements.define(name, class extends TemplateElement {});
    }
</script>
</body>
</html>
